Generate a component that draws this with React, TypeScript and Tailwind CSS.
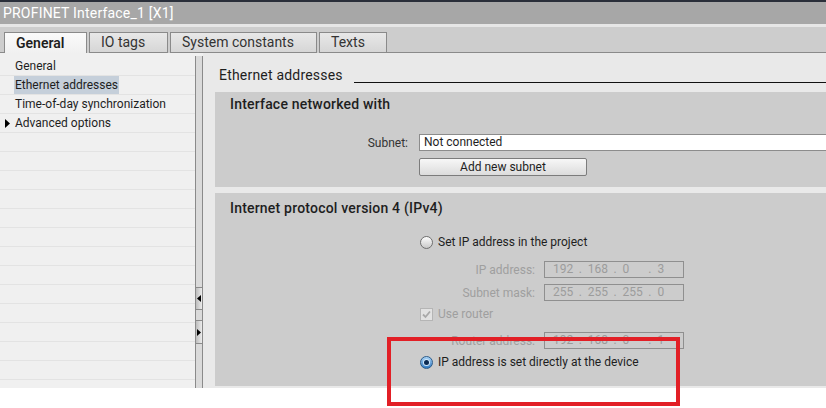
import React from "react";

const tabs = [
  { label: "General", w: "w-[83px]", active: true },
  { label: "IO tags", w: "w-[79px]", active: false },
  { label: "System constants", w: "w-[147px]", active: false },
  { label: "Texts", w: "w-[68px]", active: false },
];

const navItems = [
  { label: "General" },
  { label: "Ethernet addresses", selected: true },
  { label: "Time-of-day synchronization" },
  { label: "Advanced options", arrow: true },
];

function Radio({ checked }: { checked?: boolean }) {
  if (checked) {
    return (
      <span className="flex h-[13px] w-[13px] items-center justify-center rounded-full border border-[#2c5b8a] bg-gradient-to-b from-[#a9d3f5] to-[#2f7bc3]">
        <span className="h-[5px] w-[5px] rounded-full bg-[#0b2a52] ring-1 ring-[#cfe6fa]" />
      </span>
    );
  }
  return (
    <span className="h-[13px] w-[13px] rounded-full border border-[#6f6f6f] bg-gradient-to-b from-[#fdfdfd] to-[#c9c9c9]" />
  );
}

function Checkbox() {
  return (
    <span className="flex h-[13px] w-[13px] items-center justify-center border border-[#b5b5b5] bg-[#e2e2e2]">
      <svg width="9" height="9" viewBox="0 0 9 9">
        <path d="M1 4.5 L3.5 7 L8 1.5" fill="none" stroke="#a9a9a9" strokeWidth="1.8" />
      </svg>
    </span>
  );
}

function IpField({ parts }: { parts: string[] }) {
  return (
    <div className="ml-[9px] flex h-[17px] w-[140px] items-center border border-[#8f8f8f] pl-[8px] text-[12px] leading-[15px] text-[#9c9c9c]">
      {parts.map((p, i) => (
        <React.Fragment key={i}>
          <span className="w-[28px]">{p}</span>
          {i < parts.length - 1 && <span className="w-[10px]">.</span>}
        </React.Fragment>
      ))}
    </div>
  );
}

function FieldRow({ label, parts, className }: { label: string; parts: string[]; className: string }) {
  return (
    <div className={`flex h-[17px] items-center ${className}`}>
      <span className="w-[320px] text-right text-[#9f9f9f]">{label}</span>
      <IpField parts={parts} />
    </div>
  );
}

export default function App() {
  return (
    <div className="relative h-[408px] w-[826px] overflow-hidden bg-white font-['Roboto',sans-serif] text-[12px] text-[#1e1e1e]">
      {/* title bar */}
      <div className="h-[2px] bg-[#2a2f3a]" />
      <div className="h-[22px] bg-[#a7a7a7] pl-[3px] text-[14px] leading-[22px] tracking-[0.2px] text-white">PROFINET Interface_1 [X1]</div>
      <div className="h-[3px] bg-[#e6e6e6]" />

      {/* tabs */}
      <div className="flex h-[26px] items-end bg-[#cdcdcd]">
        <div className="w-[4px] border-b border-[#8a8a8a]" />
        {tabs.map((t) =>
          t.active ? (
            <div
              key={t.label}
              className={`${t.w} h-[21px] border-x border-t border-[#8a8a8a] bg-gradient-to-b from-[#fafafa] to-[#f0f0f0] pl-[11px] text-[14px] font-semibold leading-[20px]`}
            >
              {t.label}
            </div>
          ) : (
            <div
              key={t.label}
              className={`${t.w} ml-[2px] h-[21px] border border-[#8a8a8a] bg-gradient-to-b from-[#e8e8e8] to-[#d6d6d6] pl-[11px] text-[14px] leading-[19px] text-[#333]`}
            >
              {t.label}
            </div>
          )
        )}
        <div className="flex-1 border-b border-[#8a8a8a]" />
      </div>

      {/* body */}
      <div className="flex h-[335px]">
        {/* tree */}
        <div className="w-[195px] bg-[#f0f0f0] pt-[4px]">
          {Array.from({ length: 17 }).map((_, i) => {
            const item = navItems[i];
            return (
              <div key={i} className="relative h-[19px] border-b border-[#e3e3e3] pl-[14px] leading-[18px]">
                {item?.arrow && (
                  <svg className="absolute left-[5px] top-[5px]" width="5" height="9" viewBox="0 0 5 9">
                    <path d="M0 0 L5 4.5 L0 9 Z" fill="#000" />
                  </svg>
                )}
                {item && (
                  <span className={`inline-block px-[1px] ${item.selected ? "bg-[#c5cfda]" : ""}`}>{item.label}</span>
                )}
              </div>
            );
          })}
        </div>

        {/* splitter */}
        <div className="flex w-[8px] flex-col bg-[#f0f0f0] pt-[3px]">
          <div className="flex flex-1 flex-col border-x border-[#8a8a8a] bg-[#dadada]">
            <div className="h-[231px]" />
            <div className="flex h-[23px] items-center border-y border-[#8a8a8a] bg-gradient-to-r from-[#bdbdbd] to-[#ececec] pl-[1px]">
              <svg width="4" height="7" viewBox="0 0 4 7">
                <path d="M4 0 L0 3.5 L4 7 Z" fill="#000" />
              </svg>
            </div>
            <div className="h-[10px]" />
            <div className="flex h-[24px] items-center border-y border-[#8a8a8a] bg-gradient-to-r from-[#bdbdbd] to-[#ececec] pl-[1px]">
              <svg width="4" height="7" viewBox="0 0 4 7">
                <path d="M0 0 L4 3.5 L0 7 Z" fill="#000" />
              </svg>
            </div>
          </div>
        </div>

        {/* content */}
        <div className="flex flex-1 flex-col bg-[#e9e9e9] pl-[12px]">
          <div className="flex h-[39px] items-start pt-[14px]">
            <span className="pl-[4px] text-[14px] leading-[16px] tracking-[0.2px]">Ethernet addresses</span>
            <div className="ml-[11px] mt-[15px] h-[1px] flex-1 bg-[#111]" />
          </div>

          <div className="h-[95px] bg-[#cccccc] pt-[4px]">
            <div className="pl-[15px] text-[14px] font-medium leading-[16px] tracking-[0.2px]">Interface networked with</div>
            <div className="mt-[22px] flex h-[17px] items-center">
              <span className="w-[193px] text-right text-[#333]">Subnet:</span>
              <div className="ml-[11px] h-[17px] flex-1 border border-r-0 border-[#8c8c8c] bg-white pl-[4px] leading-[15px]">Not connected</div>
            </div>
            <div className="ml-[204px] mt-[7px] flex h-[18px] w-[168px] items-center justify-center rounded-[2px] border border-[#7c7c7c] bg-gradient-to-b from-[#f7f7f7] to-[#dcdcdc]">
              Add new subnet
            </div>
          </div>

          <div className="mt-[6px] h-[193px] bg-[#cccccc] pt-[7px]">
            <div className="pl-[15px] text-[14px] font-medium leading-[16px] tracking-[0.2px]">Internet protocol version 4 (IPv4)</div>
            <div className="mt-[18px] flex h-[16px] items-center gap-[5px] pl-[205px]">
              <Radio />
              <span>Set IP address in the project</span>
            </div>
            <FieldRow label="IP address:" parts={["192", "168", "0", "3"]} className="mt-[11px]" />
            <FieldRow label="Subnet mask:" parts={["255", "255", "255", "0"]} className="mt-[6px]" />
            <div className="mt-[5px] flex h-[16px] items-center gap-[5px] pl-[205px]">
              <Checkbox />
              <span className="text-[#9f9f9f]">Use router</span>
            </div>
            <FieldRow label="Router address:" parts={["192", "168", "0", "1"]} className="mt-[10px]" />
            <div className="mt-[5px] flex h-[16px] items-center gap-[5px] pl-[205px]">
              <Radio checked />
              <span>IP address is set directly at the device</span>
            </div>
          </div>
        </div>
      </div>

      {/* annotation */}
      <div className="absolute left-[387px] top-[337px] h-[69px] w-[293px] border-[4px] border-[#e21f26]" />
    </div>
  );
}
